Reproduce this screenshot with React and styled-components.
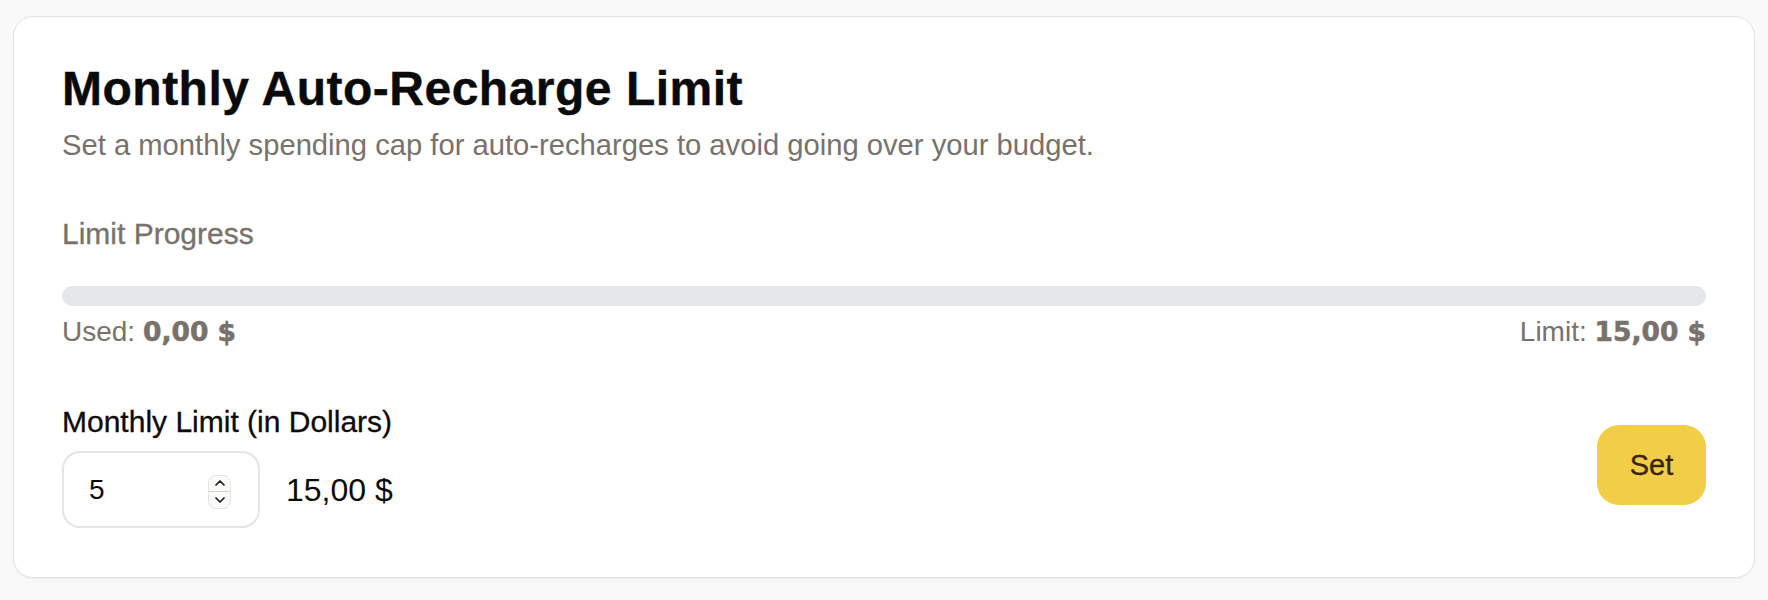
import { useState } from 'react'
import styled, { createGlobalStyle } from 'styled-components'

const GlobalStyle = createGlobalStyle`
  html, body {
    margin: 0;
    padding: 0;
    background: #f9f9f9;
  }
  body {
    font-family: 'Liberation Sans', Arial, sans-serif;
    color: #0c0a09;
  }
`

export default function App() {
  const [limit, setLimit] = useState(5)
  const used = 0
  const cap = 15

  const fmt = n => `${n.toFixed(2).replace('.', ',')} $`

  return (
    <>
      <GlobalStyle />
      <Page>
        <Card>
          <Title>Monthly Auto-Recharge Limit</Title>
          <Subtitle>Set a monthly spending cap for auto-recharges to avoid going over your budget.</Subtitle>

          <SectionLabel>Limit Progress</SectionLabel>
          <Track>
            <Fill style={{ width: `${(used / cap) * 100}%` }} />
          </Track>
          <StatsRow>
            <Stat>
              Used: <strong>{fmt(used)}</strong>
            </Stat>
            <Stat>
              Limit: <strong>{fmt(cap)}</strong>
            </Stat>
          </StatsRow>

          <FormRow>
            <Field>
              <FieldLabel htmlFor="monthly-limit">Monthly Limit (in Dollars)</FieldLabel>
              <FieldLine>
                <InputBox>
                  <NumberInput
                    id="monthly-limit"
                    type="number"
                    value={limit}
                    onChange={e => setLimit(e.target.value)}
                  />
                  <Spinner>
                    <SpinButton onClick={() => setLimit(Number(limit) + 1)}>
                      <svg width="12" height="8" viewBox="0 0 12 8" fill="none">
                        <path d="M2 6L6 2L10 6" stroke="#1c1917" strokeWidth="1.7" strokeLinecap="round" strokeLinejoin="round" />
                      </svg>
                    </SpinButton>
                    <SpinDivider />
                    <SpinButton onClick={() => setLimit(Math.max(0, Number(limit) - 1))}>
                      <svg width="12" height="8" viewBox="0 0 12 8" fill="none">
                        <path d="M2 2L6 6L10 2" stroke="#1c1917" strokeWidth="1.7" strokeLinecap="round" strokeLinejoin="round" />
                      </svg>
                    </SpinButton>
                  </Spinner>
                </InputBox>
                <Amount>{fmt(Number(limit) * 3)}</Amount>
              </FieldLine>
            </Field>
            <SetButton>Set</SetButton>
          </FormRow>
        </Card>
      </Page>
    </>
  )
}

const Page = styled.div`
  padding: 16px 13px 22px 13px;
`

const Card = styled.div`
  background: #ffffff;
  border: 1px solid #e4e4e4;
  border-radius: 20px;
  box-shadow: 0 1px 2px rgba(0, 0, 0, 0.05);
  padding: 44px 48px 49px 48px;
  display: flex;
  flex-direction: column;
`

const Title = styled.h1`
  margin: 0;
  font-size: 48px;
  line-height: 56px;
  font-weight: 700;
  color: #0a0a0a;
  letter-spacing: 0.5px;
  -webkit-text-stroke: 0.4px #0a0a0a;
`

const Subtitle = styled.p`
  margin: 8px 0 0;
  font-size: 29.2px;
  line-height: 40px;
  color: #78716c;
`

const SectionLabel = styled.div`
  margin-top: 49px;
  font-size: 30px;
  line-height: 40px;
  color: #78716c;
  -webkit-text-stroke: 0.3px #78716c;
`

const Track = styled.div`
  margin-top: 32px;
  height: 20px;
  border-radius: 999px;
  background: #e5e7eb;
  overflow: hidden;
`

const Fill = styled.div`
  height: 100%;
  background: #f2cd48;
`

const StatsRow = styled.div`
  margin-top: 6px;
  display: flex;
  justify-content: space-between;
`

const Stat = styled.span`
  font-size: 28px;
  line-height: 40px;
  color: #78716c;

  strong {
    font-family: 'DejaVu Sans', sans-serif;
    font-weight: 700;
    font-size: 26.5px;
    color: #78716c;
    -webkit-text-stroke: 0.6px #78716c;
  }
`

const FormRow = styled.div`
  margin-top: 50px;
  display: flex;
  align-items: center;
  justify-content: space-between;
`

const Field = styled.div`
  display: flex;
  flex-direction: column;
  gap: 9px;
`

const FieldLabel = styled.label`
  font-size: 30px;
  line-height: 40px;
  color: #0c0a09;
  -webkit-text-stroke: 0.3px #0c0a09;
`

const FieldLine = styled.div`
  display: flex;
  align-items: center;
  gap: 26px;
`

const InputBox = styled.div`
  width: 198px;
  height: 77px;
  box-sizing: border-box;
  border: 2px solid #e5e5e5;
  border-radius: 18px;
  display: flex;
  align-items: center;
  padding: 0 27px 0 25px;
  gap: 8px;
`

const NumberInput = styled.input`
  flex: 1;
  min-width: 0;
  border: none;
  outline: none;
  background: transparent;
  padding: 0;
  font-family: 'Liberation Sans', Arial, sans-serif;
  font-size: 28px;
  color: #0c0a09;
  -moz-appearance: textfield;

  &::-webkit-outer-spin-button,
  &::-webkit-inner-spin-button {
    -webkit-appearance: none;
    margin: 0;
  }
`

const Spinner = styled.div`
  width: 23px;
  height: 34px;
  margin-top: 4px;
  box-sizing: border-box;
  border: 1px solid #e7e5e4;
  border-radius: 8px;
  background: #fafaf9;
  display: flex;
  flex-direction: column;
  overflow: hidden;
`

const SpinButton = styled.button`
  flex: 1;
  border: none;
  background: transparent;
  padding: 0;
  display: flex;
  align-items: center;
  justify-content: center;
  cursor: pointer;
`

const SpinDivider = styled.div`
  height: 1px;
  background: #d6d3d1;
`

const Amount = styled.span`
  font-size: 32px;
  line-height: 40px;
  color: #0c0a09;
`

const SetButton = styled.button`
  width: 109px;
  height: 80px;
  border: none;
  border-radius: 22px;
  background: #f2cd48;
  color: #3a2407;
  font-family: 'Liberation Sans', Arial, sans-serif;
  font-size: 29px;
  -webkit-text-stroke: 0.3px #3a2407;
  cursor: pointer;
`
